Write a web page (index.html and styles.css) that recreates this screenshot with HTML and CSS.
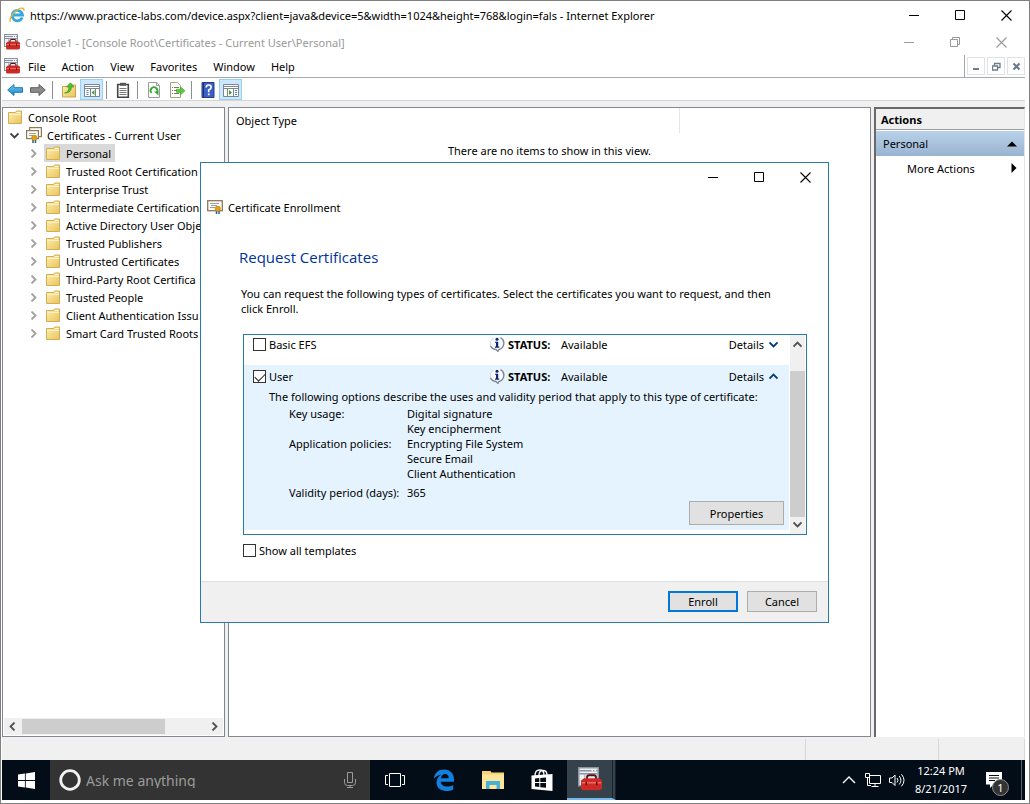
FILE: index.html
```
<!DOCTYPE html>
<html lang="en">
<head>
    <meta charset="UTF-8">
    <meta name="viewport" content="width=device-width, initial-scale=1.0">
    <title>Console1 - Certificates</title>
    <link rel="stylesheet" href="styles.css">
</head>
<body>
    <svg class="sprite" aria-hidden="true">
        <defs>
            <linearGradient id="gold" x1="0" y1="0" x2="1" y2="1">
                <stop offset="0" stop-color="#fff0b0"/>
                <stop offset="1" stop-color="#e9c35c"/>
            </linearGradient>
            <linearGradient id="sky" x1="0" y1="0" x2="0" y2="1">
                <stop offset="0" stop-color="#6fd0f5"/>
                <stop offset="1" stop-color="#1583c9"/>
            </linearGradient>
        </defs>
        <symbol id="i-mmc" viewBox="0 0 16 16">
            <rect x="0.5" y="0.5" width="13" height="12" fill="#eef1f4" stroke="#8b939c"/>
            <path d="M1 2.500h12M1 4.500h12" stroke="#8793a5"/>
            <path d="M9 2.500h1M11 2.500h1" stroke="#fff"/>
            <path d="M4.500 5v7" stroke="#b7bec6"/>
            <path d="M6 8V7q0-1.500 1.500-1.500h3Q12 5.500 12 7v1" fill="none" stroke="#541010" stroke-width="1.200"/>
            <path d="M2 9L4 7.500h10.500L16 9v5.500L14.500 15.500H3L2 14.500z" fill="#cb2a26"/>
            <path d="M2.500 10.500h13" stroke="#ef6b62"/>
            <path d="M5.500 9.800v2.400M12.500 9.800v2.400" stroke="#6f0c0c"/>
        </symbol>
        <symbol id="i-ie" viewBox="0 0 16 16">
            <path d="M13.200 10.500A5.200 5.200 0 1 1 13.500 8H4.500" fill="none" stroke="#35a8df" stroke-width="2.800"/>
            <path d="M1.500 14.800C-.5 12 4 5.500 9 2.500c4-2.300 6.500-1.500 5.800 1.200" fill="none" stroke="#ecb62c" stroke-width="1.400"/>
        </symbol>
        <symbol id="i-folder" viewBox="0 0 14 14">
            <path d="M.5 2.500h7l1-1.500h5v12.500H.5z" fill="url(#gold)" stroke="#d3ad55"/>
            <path d="M9 2.500h3.500" stroke="#fffbe8"/>
            <path d="M1 4.500h12" stroke="#fff3c4"/>
        </symbol>
        <symbol id="i-cert" viewBox="0 0 16 14">
            <rect x="0.700" y="0.700" width="14.600" height="10" fill="#fdfdf8" stroke="#8c7a5a" stroke-width="1.300"/>
            <path d="M3 3.500h9M4 5.500h6M3 7.500h5" stroke="#9a9ba6"/>
            <path d="M9.500 10v4M12 10v4" stroke="#256096" stroke-width="1.500"/>
            <circle cx="10.800" cy="8.800" r="2.700" fill="#e0a11a" stroke="#b17a0c" stroke-width=".5"/>
        </symbol>
        <symbol id="i-certs" viewBox="0 0 16 16">
            <rect x="3.600" y="0.600" width="11.800" height="9" fill="#fdfdf8" stroke="#8c7a5a" stroke-width="1.200"/>
            <rect x="0.600" y="3.600" width="11.800" height="8" fill="#fdfdf8" stroke="#8c7a5a" stroke-width="1.200"/>
            <path d="M3 6.500h7M3 8.500h4" stroke="#9a9ba6"/>
            <path d="M7 12v4M9.500 12v4" stroke="#256096" stroke-width="1.500"/>
            <circle cx="8.300" cy="10.800" r="2.700" fill="#e0a11a" stroke="#b17a0c" stroke-width=".5"/>
        </symbol>
        <symbol id="i-info" viewBox="0 0 16 16">
            <path d="M8 .8a6.800 6.600 0 0 1 2 12.800L9 15.500 7 13.700A6.800 6.600 0 0 1 8 .8z" fill="#f7f8fb"/>
            <path d="M11.500 1.500a6.800 6.600 0 0 1-1.500 12L9 15.300 6.800 13.500Q3 13 1.500 10" fill="none" stroke="#7d8594" stroke-width="1.400"/>
            <path d="M1.500 10Q0 5.500 4 2" fill="none" stroke="#d3d6dd"/>
            <circle cx="8" cy="3.200" r="1.500" fill="#12256b"/>
            <path d="M6 5.700h3.200v4.800h1v1.200H6v-1.200h1V6.800H6z" fill="#12256b"/>
        </symbol>
        <symbol id="i-min" viewBox="0 0 11 11"><path d="M0 5.500h10" stroke="currentColor"/></symbol>
        <symbol id="i-max" viewBox="0 0 11 11"><path d="M.5 .5h9v9h-9z" fill="none" stroke="currentColor"/></symbol>
        <symbol id="i-restore" viewBox="0 0 11 11"><path d="M.5 2.500h7v7h-7zM2.500 2.500v-2h7v7h-2" fill="none" stroke="currentColor"/></symbol>
        <symbol id="i-close" viewBox="0 0 11 11"><path d="M.5 .5l10 10M10.500 .5l-10 10" stroke="currentColor" stroke-width="1.100"/></symbol>
        <symbol id="i-chev" viewBox="0 0 9 9"><path d="M2.500 .5l4 4-4 4" fill="none" stroke="currentColor" stroke-width="1.800"/></symbol>
    </svg>

    <div class="screen">
        <header class="titlebar">
            <svg class="icon16"><use href="#i-ie"/></svg>
            <span class="title">https://www.practice-labs.com/device.aspx?client=java&amp;device=5&amp;width=1024&amp;height=768&amp;login=fals - Internet Explorer</span>
            <div class="win-buttons">
                <button aria-label="Minimize"><svg><use href="#i-min"/></svg></button>
                <button aria-label="Maximize"><svg><use href="#i-max"/></svg></button>
                <button aria-label="Close"><svg><use href="#i-close"/></svg></button>
            </div>
        </header>

        <div class="titlebar console-title">
            <svg class="icon16"><use href="#i-mmc"/></svg>
            <span class="title">Console1 - [Console Root\Certificates - Current User\Personal]</span>
            <div class="win-buttons">
                <button aria-label="Minimize"><svg><use href="#i-min"/></svg></button>
                <button aria-label="Restore"><svg><use href="#i-restore"/></svg></button>
                <button aria-label="Close"><svg><use href="#i-close"/></svg></button>
            </div>
        </div>

        <nav class="menubar">
            <svg class="icon16"><use href="#i-mmc"/></svg>
            <button>File</button>
            <button>Action</button>
            <button>View</button>
            <button>Favorites</button>
            <button>Window</button>
            <button>Help</button>
            <div class="mdi-buttons">
                <button aria-label="Minimize window"><svg viewBox="0 0 9 9"><path d="M1 7h6" stroke="currentColor" stroke-width="2"/></svg></button>
                <button aria-label="Restore window"><svg viewBox="0 0 9 9"><path d="M.5 4h5v4h-5zM2.500 4V1.500h5.500v4H6M2 1.500h6.500M0 4h6" fill="none" stroke="currentColor" stroke-width="1.300"/></svg></button>
                <button aria-label="Close window"><svg viewBox="0 0 9 9"><path d="M1.500 1.500l6 6M7.500 1.500l-6 6" stroke="currentColor" stroke-width="2.200"/></svg></button>
            </div>
        </nav>

        <div class="toolbar">
            <button aria-label="Back"><svg viewBox="0 0 16 16"><path d="M.7 8L7 2.500v3.200h8.500v4.600H7v3.200z" fill="url(#sky)" stroke="#2377ae"/></svg></button>
            <button aria-label="Forward"><svg viewBox="0 0 16 16"><path d="M15.300 8L9 2.500v3.200H.5v4.600H9v3.200z" fill="#8c8c8c" stroke="#5f5f5f"/></svg></button>
            <span class="sep"></span>
            <button aria-label="Up one level"><svg viewBox="0 0 16 16"><path d="M1.500 4.500h5l1-1.500h7v12h-13z" fill="url(#gold)" stroke="#cda548"/><path d="M3.500 11Q8 10 8 5H5.500L9.500 .8 13 5h-2.500Q10 11.500 3.500 11z" fill="#4fc22c" stroke="#2f8f17" stroke-width=".6"/></svg></button>
            <button class="on" aria-label="Show console tree"><svg viewBox="0 0 16 16"><path d="M.5 2.500h15v12H.5z" fill="#fff" stroke="#7c8791"/><path d="M1 4.500h14M1 6.500h14M6.500 7v7M11.500 7v7" stroke="#7c8791"/><path d="M2.500 8.500h2M2.500 10.500h2M2.500 12.500h2" stroke="#4b7fae"/><path d="M10.500 8v5L7.500 10.500z" fill="#3aa51c"/></svg></button>
            <span class="sep"></span>
            <button aria-label="Clipboard"><svg viewBox="0 0 16 16"><path d="M2.700 2.500h10.600v12.800H2.700z" fill="#fff" stroke="#444" stroke-width="1.600"/><path d="M5 .8h6v3H5z" fill="#555"/><path d="M4.500 6.500h7M4.500 8.500h7M4.500 10.500h7M4.500 12.500h7" stroke="#777"/></svg></button>
            <span class="sep"></span>
            <button aria-label="Refresh"><svg viewBox="0 0 16 16"><path d="M2.500 .5h8l3 3v12h-11z" fill="#fff" stroke="#9a9a9a"/><path d="M10.500 .5v3h3" fill="none" stroke="#9a9a9a"/><path d="M5.500 11A3.400 3.400 0 1 1 10.500 11" fill="none" stroke="#35a935" stroke-width="1.800"/><path d="M8 9.500h4.500v4z" fill="#35a935"/></svg></button>
            <button aria-label="Export list"><svg viewBox="0 0 16 16"><path d="M1.500 .5h7l3 3v12h-10z" fill="#fffef2" stroke="#a3a38f"/><path d="M3 5.500h1M3 8.500h1M3 11.500h1M5 5.500h5M5 8.500h3M5 11.500h5" stroke="#777"/><path d="M7.500 7.200h4V4.800L16 8.800l-4.500 4v-2.400h-4z" fill="#5bc83a" stroke="#399a20" stroke-width=".5"/></svg></button>
            <span class="sep"></span>
            <button aria-label="Help"><svg viewBox="0 0 16 16"><path d="M2 .5h12v15H2z" fill="#3b5fc4" stroke="#243c86"/><path d="M3.500 1v14" stroke="#203272"/><path d="M6.200 5.500Q6.200 3 8.700 3t2.500 2.300Q11.200 7 8.700 8v2.200" fill="none" stroke="#fff" stroke-width="1.600"/><path d="M7.900 11.500h1.700v1.700H7.900z" fill="#fff"/></svg></button>
            <button class="on" aria-label="Show action pane"><svg viewBox="0 0 16 16"><path d="M.5 2.500h15v12H.5z" fill="#fff" stroke="#7c8791"/><path d="M1 4.500h14M1 6.500h14M4.500 7v7M10.500 7v7" stroke="#7c8791"/><path d="M12 8.500h2M12 10.500h2M12 12.500h2" stroke="#4b7fae"/><path d="M6 8v5l3-2.500z" fill="#3aa51c"/></svg></button>
        </div>

        <main class="panes">
            <section class="tree-pane">
                <ul class="tree">
                    <li><svg class="folder"><use href="#i-folder"/></svg><span>Console Root</span></li>
                    <li class="level1"><svg class="chev open"><use href="#i-chev"/></svg><svg class="icon16"><use href="#i-certs"/></svg><span>Certificates - Current User</span></li>
                    <li class="level2"><svg class="chev"><use href="#i-chev"/></svg><span class="node selected"><svg class="folder"><use href="#i-folder"/></svg>Personal</span></li>
                    <li class="level2"><svg class="chev"><use href="#i-chev"/></svg><span class="node"><svg class="folder"><use href="#i-folder"/></svg>Trusted Root Certification</span></li>
                    <li class="level2"><svg class="chev"><use href="#i-chev"/></svg><span class="node"><svg class="folder"><use href="#i-folder"/></svg>Enterprise Trust</span></li>
                    <li class="level2"><svg class="chev"><use href="#i-chev"/></svg><span class="node"><svg class="folder"><use href="#i-folder"/></svg>Intermediate Certification</span></li>
                    <li class="level2"><svg class="chev"><use href="#i-chev"/></svg><span class="node"><svg class="folder"><use href="#i-folder"/></svg>Active Directory User Obje</span></li>
                    <li class="level2"><svg class="chev"><use href="#i-chev"/></svg><span class="node"><svg class="folder"><use href="#i-folder"/></svg>Trusted Publishers</span></li>
                    <li class="level2"><svg class="chev"><use href="#i-chev"/></svg><span class="node"><svg class="folder"><use href="#i-folder"/></svg>Untrusted Certificates</span></li>
                    <li class="level2"><svg class="chev"><use href="#i-chev"/></svg><span class="node"><svg class="folder"><use href="#i-folder"/></svg>Third-Party Root Certifica</span></li>
                    <li class="level2"><svg class="chev"><use href="#i-chev"/></svg><span class="node"><svg class="folder"><use href="#i-folder"/></svg>Trusted People</span></li>
                    <li class="level2"><svg class="chev"><use href="#i-chev"/></svg><span class="node"><svg class="folder"><use href="#i-folder"/></svg>Client Authentication Issu</span></li>
                    <li class="level2"><svg class="chev"><use href="#i-chev"/></svg><span class="node"><svg class="folder"><use href="#i-folder"/></svg>Smart Card Trusted Roots</span></li>
                </ul>
                <div class="hscroll">
                    <svg class="chev left"><use href="#i-chev"/></svg>
                    <div class="track"><div class="thumb"></div></div>
                    <svg class="chev"><use href="#i-chev"/></svg>
                </div>
            </section>

            <section class="list-pane">
                <div class="column-head"><span>Object Type</span></div>
                <p class="empty">There are no items to show in this view.</p>
            </section>

            <aside class="actions-pane">
                <h2>Actions</h2>
                <button class="group">Personal<svg viewBox="0 0 10 6"><path d="M0 5.500L5 .5l5 5z"/></svg></button>
                <button class="item">More Actions<svg class="right" viewBox="0 0 6 10"><path d="M.5 0l5 5-5 5z"/></svg></button>
            </aside>
        </main>

        <div class="statusbar"><span></span><span></span></div>

        <footer class="taskbar">
            <button class="start" aria-label="Start"><svg viewBox="0 0 16 16"><path d="M0 2.300L6.500 1.400v6.200H0zM7.300 1.300L16 0v7.600H7.300zM0 8.400h6.500v6.200L0 13.700zM7.300 8.400H16V16l-8.700-1.300z" fill="#fff"/></svg></button>
            <div class="search">
                <svg class="cortana" viewBox="0 0 22 22"><circle cx="11" cy="11" r="9.300" fill="none" stroke="#f2f2f2" stroke-width="2.800"/></svg>
                <input type="text" placeholder="Ask me anything" aria-label="Search">
                <svg class="mic" viewBox="0 0 12 16"><path d="M3.500 .5h5v10h-5zM.5 7v3.500q0 3 3 3h5q3 0 3-3V7M6 13.500v2M3 15.500h6" fill="none" stroke="#9b9b9b"/></svg>
            </div>
            <button aria-label="Task View"><svg class="taskview" viewBox="0 0 20 14"><path d="M4.500 .5h11v13h-11zM3 2.500H.5v9H3M17 2.500h2.500v9H17" fill="none" stroke="#fff"/></svg></button>
            <button aria-label="Edge"><svg class="icon22" viewBox="0 0 22 22"><path d="M.8 9.800C1.500 3.800 5.500 .5 11.200 .5c6.300 0 9.800 4.500 9.800 9.700v2.500H7.800c.2 3.400 3.200 4.800 6.400 4.800 2.200 0 4.200-.6 6-1.600v4.500c-2 1-4.300 1.500-6.900 1.500-6.300 0-9.800-3.500-9.800-8.300 0-3.400 1.800-6.300 4.800-7.800-3.100.3-5.600 1.700-7.500 4zM7.900 9.200h7.800c0-2.500-1.200-4.200-3.700-4.200-2.300 0-3.700 1.800-4.100 4.200z" fill="#1280dc"/></svg></button>
            <button aria-label="File Explorer"><svg class="icon22" viewBox="0 0 22 22"><path d="M0 2h8.500l1 1.500H22V20H0z" fill="#f6d476"/><path d="M0 5.500h22V20H0z" fill="#fce69b"/><path d="M4 12h14v8h-3.500v-4h-7v4H4z" fill="#48b2d4"/></svg></button>
            <button aria-label="Store"><svg class="icon22" viewBox="0 0 22 22"><path d="M4 7Q4 1 8.500 1T13 6M8 6q0-4.500 4-4.500T16 6" fill="none" stroke="#fff" stroke-width="1.300"/><path d="M.5 6.500L21.500 5v17L.5 20z" fill="#fff"/><path d="M4 9.500l4.300-.4v4H4zM9.300 9L15 8.500v4.600H9.300zM4 14.100h4.300v4L4 17.600zM9.300 14.100H15v4.700l-5.700-.6z" fill="#020d18"/></svg></button>
            <button class="running" aria-label="Console1"><svg class="icon24"><use href="#i-mmc"/></svg></button>
            <div class="tray">
                <button aria-label="Show hidden icons"><svg viewBox="0 0 16 16"><path d="M2 11l6-6 6 6" fill="none" stroke="#fff" stroke-width="1.400"/></svg></button>
                <button aria-label="Network"><svg viewBox="0 0 16 16"><path d="M4.500 3.500h11v8h-11zM10 11.500V14M6.500 14.500h7M.5 1.500h4v4h-4zM2.500 5.500v8H6" fill="none" stroke="#fff"/></svg></button>
                <button aria-label="Volume"><svg viewBox="0 0 16 16"><path d="M.5 6h2.500L6 3v10.500L3 10.500H.5zM8 6q2 2.200 0 4.500M10.200 4q3.500 4.200 0 8.500M12.500 2.300q5 6 0 12" fill="none" stroke="#fff"/></svg></button>
                <time class="clock" datetime="2017-08-21T12:24">12:24 PM<br>8/21/2017</time>
                <button class="notify" aria-label="Notifications"><svg viewBox="0 0 16 16"><path d="M0 0h16v12.500H7.500L4 16v-3.500H0z" fill="#fff"/><path d="M3 3.500h10M3 6h10M3 8.500h6" stroke="#020d18"/></svg><span class="badge">1</span></button>
            </div>
        </footer>
    </div>

    <div class="dialog" role="dialog" aria-labelledby="dialog-title">
        <div class="dialog-bar win-buttons">
            <button aria-label="Minimize"><svg><use href="#i-min"/></svg></button>
            <button aria-label="Maximize"><svg><use href="#i-max"/></svg></button>
            <button aria-label="Close"><svg><use href="#i-close"/></svg></button>
        </div>
        <div class="dialog-name" id="dialog-title"><svg class="icon16"><use href="#i-cert"/></svg>Certificate Enrollment</div>
        <div class="dialog-body">
            <h1>Request Certificates</h1>
            <p class="intro">You can request the following types of certificates. Select the certificates you want to request, and then click Enroll.</p>
            <div class="templates">
                <div class="template-list">
                    <div class="template first">
                        <label><input type="checkbox">Basic EFS</label>
                        <svg class="icon16"><use href="#i-info"/></svg>
                        <b>STATUS:</b><span>Available</span>
                        <button class="details">Details<svg class="chev down"><use href="#i-chev"/></svg></button>
                    </div>
                    <div class="expanded">
                        <div class="template">
                            <label><input type="checkbox" checked>User</label>
                            <svg class="icon16"><use href="#i-info"/></svg>
                            <b>STATUS:</b><span>Available</span>
                            <button class="details">Details<svg class="chev up"><use href="#i-chev"/></svg></button>
                        </div>
                        <p>The following options describe the uses and validity period that apply to this type of certificate:</p>
                        <dl>
                            <dt>Key usage:</dt>
                            <dd>Digital signature<br>Key encipherment</dd>
                            <dt>Application policies:</dt>
                            <dd>Encrypting File System<br>Secure Email<br>Client Authentication</dd>
                            <dt class="validity">Validity period (days):</dt>
                            <dd class="validity">365</dd>
                        </dl>
                        <button class="push properties">Properties</button>
                    </div>
                </div>
                <div class="vscroll">
                    <svg class="chev up"><use href="#i-chev"/></svg>
                    <div class="track"><div class="thumb"></div></div>
                    <svg class="chev down"><use href="#i-chev"/></svg>
                </div>
            </div>
            <label class="show-all"><input type="checkbox">Show all templates</label>
        </div>
        <div class="dialog-foot">
            <button class="push primary">Enroll</button>
            <button class="push">Cancel</button>
        </div>
    </div>
</body>
</html>
```
FILE: styles.css
```
* {
    box-sizing: border-box;
}
body {
    margin: 0;
    background: #fff;
    color: #000;
    font-family: "Noto Sans", "Open Sans", sans-serif;
    font-size: 11px;
    line-height: 15px;
}
h1, h2, p, ul, dl, dd {
    margin: 0;
    padding: 0;
}
button {
    padding: 0;
    border: none;
    background: none;
    color: inherit;
    font: inherit;
}
svg {
    display: block;
    flex: none;
}
.sprite {
    position: absolute;
    width: 0;
    height: 0;
}
.icon16 {
    width: 16px;
    height: 16px;
}
.icon22 {
    width: 22px;
    height: 22px;
}
.icon24 {
    width: 24px;
    height: 24px;
}
.folder {
    width: 14px;
    height: 14px;
}
.chev {
    width: 9px;
    height: 9px;
}
.chev.left {
    transform: rotate(180deg);
}
.chev.up {
    transform: rotate(-90deg);
}
.chev.down, .chev.open {
    transform: rotate(90deg);
}

/* outer window */
.screen {
    display: flex;
    flex-direction: column;
    height: 100vh;
    padding: 0 4px 3px 1px;
    border: 1px solid #808080;
}
.titlebar {
    display: flex;
    align-items: center;
    height: 28px;
    padding-left: 7px;
}
.titlebar .title {
    flex: 1;
    padding-left: 5px;
    white-space: nowrap;
}
.win-buttons {
    display: flex;
}
.win-buttons button {
    display: flex;
    justify-content: center;
    align-items: center;
    width: 46px;
    height: 28px;
}
.win-buttons svg {
    width: 11px;
    height: 11px;
}
.titlebar .win-buttons {
    margin-right: -4px;
}
.console-title {
    height: 26px;
    padding-left: 2px;
    color: #999;
}
.console-title .win-buttons {
    margin-right: 1px;
}
.console-title .win-buttons button {
    height: 26px;
}
.menubar {
    display: flex;
    align-items: center;
    height: 23px;
    padding-left: 2px;
    border-bottom: 1px solid #a8a8a8;
}
.menubar > button {
    margin-left: 8px;
    margin-right: 8px;
}
.mdi-buttons {
    display: flex;
    align-items: center;
    gap: 2px;
    height: 22px;
    margin-left: auto;
    padding-left: 2px;
    border-left: 1px solid #a8a8a8;
}
.mdi-buttons button {
    display: flex;
    justify-content: center;
    align-items: center;
    width: 18px;
    height: 18px;
    border: 1px solid #dfe3e3;
    color: #6d7b8a;
}
.mdi-buttons svg {
    width: 9px;
    height: 9px;
}
.toolbar {
    display: flex;
    align-items: center;
    height: 23px;
    padding: 1px 0 0 1px;
    border-bottom: 1px solid #d5d5d5;
}
.toolbar button {
    display: flex;
    justify-content: center;
    align-items: center;
    width: 23px;
    height: 21px;
}
.toolbar button.on {
    border: 1px solid #99d1f5;
    background: #cce8ff;
}
.toolbar svg {
    width: 16px;
    height: 16px;
}
.sep {
    width: 1px;
    height: 18px;
    margin: 0 4px 0 3px;
    background: #8d8d8d;
}

/* panes */
.panes {
    display: flex;
    flex: 1;
    gap: 3px;
    min-height: 0;
    padding-top: 6px;
    background: #f0f0f0;
}
.tree-pane, .list-pane {
    display: flex;
    flex-direction: column;
    border: 1px solid #828790;
    background: #fff;
}
.tree-pane {
    width: 223px;
}
.tree {
    flex: 1;
    overflow: hidden;
    list-style: none;
}
.tree li {
    display: flex;
    align-items: center;
    height: 18px;
    padding-left: 5px;
    white-space: nowrap;
    gap: 6px;
}
.tree li.level1 {
    padding-left: 7px;
    gap: 7px;
}
.tree li.level1 .icon16 {
    margin-right: -2px;
}
.tree li.level2 {
    padding-left: 26px;
}
.level2 .chev {
    color: #a0a0a0;
}
.level1 .chev {
    color: #404040;
}
.node {
    display: flex;
    align-items: center;
    gap: 6px;
    height: 18px;
    padding: 0 4px 0 2px;
}
.node.selected {
    background: #d9d9d9;
}
.hscroll {
    display: flex;
    align-items: center;
    gap: 5px;
    height: 17px;
    margin: 0 1px 1px;
    padding: 0 4px;
    background: #f0f0f0;
    color: #505050;
}
.hscroll .track {
    flex: 1;
}
.hscroll .thumb {
    width: 78%;
    height: 15px;
    background: #cdcdcd;
}
.list-pane {
    flex: 1;
}
.column-head {
    display: flex;
    align-items: center;
    width: 451px;
    height: 25px;
    padding-left: 7px;
    border-right: 1px solid #e5e5e5;
}
.empty {
    padding-top: 10px;
    text-align: center;
}
.actions-pane {
    width: 151px;
    border-top: 2px solid #696969;
    border-left: 2px solid #696969;
    border-right: 1px solid #e3e3e3;
    background: #fff;
}
.actions-pane h2 {
    height: 21px;
    padding: 3px 5px;
    border-bottom: 1px solid #a0a0a0;
    background: #f0f0f0;
    font-size: 11px;
}
.actions-pane button {
    display: flex;
    justify-content: space-between;
    align-items: center;
    width: 100%;
    height: 25px;
    padding: 0 7px;
}
.actions-pane .group {
    margin-top: 1px;
    background: linear-gradient(#b9d1ea, #99b4d1);
}
.actions-pane .item {
    height: 24px;
    padding-left: 31px;
}
.actions-pane svg {
    width: 10px;
    height: 6px;
}
.actions-pane svg.right {
    width: 6px;
    height: 10px;
}
.statusbar {
    display: flex;
    justify-content: flex-end;
    height: 23px;
    padding-top: 2px;
    background: #f0f0f0;
}
.statusbar span {
    width: 133px;
    border-left: 1px solid #d7d7d7;
}
.statusbar span:last-child {
    width: 87px;
    border-right: 1px solid #d7d7d7;
}

/* taskbar */
.taskbar {
    display: flex;
    height: 40px;
    background: #020d18;
    color: #fff;
}
.taskbar button {
    display: flex;
    justify-content: center;
    align-items: center;
    width: 49px;
}
.taskbar .start {
    width: 48px;
}
.start svg {
    width: 17px;
    height: 17px;
}
.search {
    display: flex;
    align-items: center;
    width: 320px;
    padding: 0 14px 0 9px;
    background: #333;
}
.cortana {
    width: 22px;
    height: 22px;
}
.search input {
    flex: 1;
    min-width: 0;
    padding: 0 5px;
    border: none;
    background: none;
    color: #fff;
    font: inherit;
    font-size: 14px;
}
.search input::placeholder {
    color: #9b9b9b;
    opacity: 1;
}
.mic {
    width: 12px;
    height: 16px;
}
.taskview {
    width: 20px;
    height: 14px;
}
.taskbar .running {
    margin-left: 1px;
    border-right: 4px double #16222d;
    border-bottom: 2px solid #76b9ed;
    background: #35414b;
}
.tray {
    display: flex;
    align-items: center;
    margin-left: auto;
    margin-right: 3px;
    padding-right: 7px;
    border-right: 1px solid #59616a;
}
.tray button {
    width: 24px;
}
.tray svg {
    width: 16px;
    height: 16px;
}
.clock {
    width: 64px;
    text-align: center;
    line-height: 18px;
}
.tray .notify {
    position: relative;
    width: 41px;
}
.badge {
    position: absolute;
    left: 19px;
    top: 7px;
    width: 17px;
    height: 17px;
    border: 1px solid #8b8b8b;
    border-radius: 50%;
    background: #333;
    line-height: 15px;
    text-align: center;
}

/* enrollment dialog, floats over the console */
.dialog {
    position: absolute;
    left: 200px;
    top: 162px;
    width: 629px;
    border: 1px solid #2a7aa8;
    background: #fff;
}
.dialog-bar {
    justify-content: flex-end;
}
.dialog-name {
    display: flex;
    align-items: center;
    gap: 5px;
    margin-top: 8px;
    padding-left: 6px;
}
.dialog-body {
    padding: 32px 21px 23px 42px;
}
.dialog h1 {
    margin-left: -4px;
    color: #003399;
    font-family: "Open Sans", sans-serif;
    font-size: 15px;
    font-weight: normal;
    line-height: 20px;
}
.intro {
    margin: 19px 0 18px -2px;
    padding-right: 16px;
}
.templates {
    display: flex;
    border: 1px solid #2a7aa8;
}
.template-list {
    flex: 1;
    padding-bottom: 4px;
}
.template {
    display: flex;
    align-items: center;
    height: 24px;
    padding: 0 11px 2px 9px;
}
.template.first {
    height: 30px;
    padding-bottom: 12px;
}
.template label {
    width: 236px;
}
label {
    display: flex;
    align-items: center;
    gap: 3px;
}
input[type="checkbox"] {
    appearance: none;
    width: 13px;
    height: 13px;
    margin: 0;
    border: 1px solid #333;
    background: #fff;
}
input[type="checkbox"]:checked::before {
    content: "";
    display: block;
    width: 9px;
    height: 5px;
    margin: 2px 1px;
    border-left: 1px solid #222;
    border-bottom: 1px solid #222;
    transform: rotate(-45deg);
}
.template b {
    width: 53px;
    margin-left: 3px;
}
.details {
    display: flex;
    align-items: center;
    gap: 5px;
    margin-left: auto;
}
.details .chev {
    color: #003b80;
}
.expanded {
    padding-bottom: 5px;
    background: #e5f3ff;
}
.expanded p {
    padding-left: 25px;
    white-space: nowrap;
}
.expanded dl {
    display: grid;
    grid-template-columns: 118px 1fr;
    padding: 2px 0 0 45px;
}
.expanded .validity {
    padding-top: 4px;
}
.push {
    width: 70px;
    height: 21px;
    border: 1px solid #adadad;
    background: #e1e1e1;
}
.push.primary {
    border: 2px solid #0078d7;
}
.push.properties {
    display: block;
    width: 95px;
    height: 24px;
    margin: 1px 5px 0 auto;
}
.vscroll {
    display: flex;
    flex-direction: column;
    align-items: center;
    width: 17px;
    padding: 5px 0;
    border-left: 1px solid #fff;
    border-right: 1px solid #fff;
    background: #f0f0f0;
    color: #505050;
}
.vscroll .track {
    flex: 1;
    width: 15px;
    padding: 22px 0 3px;
}
.vscroll .thumb {
    height: 100%;
    background: #cdcdcd;
}
.show-all {
    margin-top: 8px;
}
.dialog-foot {
    display: flex;
    justify-content: flex-end;
    gap: 9px;
    padding: 9px 11px 10px;
    border-top: 1px solid #dfdfdf;
    background: #f0f0f0;
}
```
